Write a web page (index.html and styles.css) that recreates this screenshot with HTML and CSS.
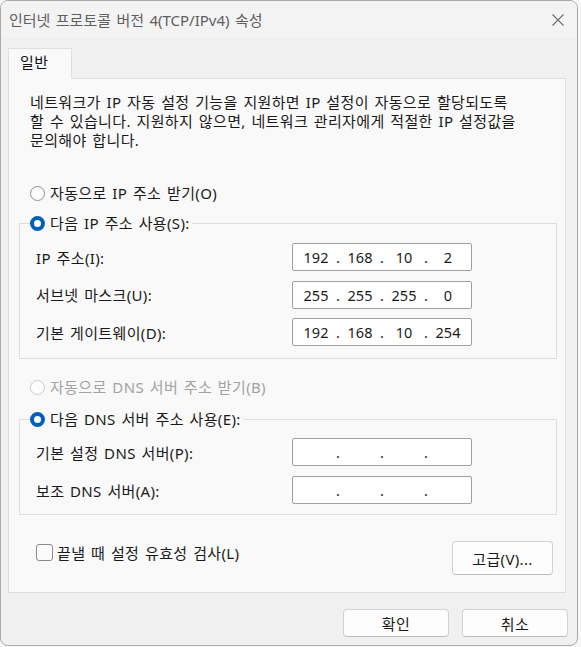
FILE: index.html
```html
<!DOCTYPE html>
<html lang="ko">
<head>
<meta charset="utf-8">
<title>인터넷 프로토콜 버전 4(TCP/IPv4) 속성</title>
<link rel="stylesheet" href="styles.css">
</head>
<body>
<div class="window">
  <div class="titlebar">
    <span class="title">인터넷 프로토콜 버전 4(TCP/IPv4) 속성</span>
    <svg class="close" width="12" height="12" viewBox="0 0 12 12"><path d="M0.5 0.5L11.5 11.5M11.5 0.5L0.5 11.5" stroke="#6e6e6e" stroke-width="1.1" fill="none"/></svg>
  </div>
  <div class="content">
    <div class="tabs"><div class="tab">일반</div></div>
    <div class="panel">
      <p class="desc">네트워크가 IP 자동 설정 기능을 지원하면 IP 설정이 자동으로 할당되도록<br>할 수 있습니다. 지원하지 않으면, 네트워크 관리자에게 적절한 IP 설정값을<br>문의해야 합니다.</p>

      <div class="radio-row first"><span class="radio"></span><span>자동으로 IP 주소 받기(O)</span></div>
      <fieldset class="group group-ip">
        <legend><span class="radio checked"></span><span>다음 IP 주소 사용(S):</span></legend>
        <div class="field-row"><span class="label">IP 주소(I):</span>
          <div class="ipbox"><span class="seg">192</span><span class="dot">.</span><span class="seg">168</span><span class="dot">.</span><span class="seg">10</span><span class="dot">.</span><span class="seg">2</span></div></div>
        <div class="field-row"><span class="label">서브넷 마스크(U):</span>
          <div class="ipbox"><span class="seg">255</span><span class="dot">.</span><span class="seg">255</span><span class="dot">.</span><span class="seg">255</span><span class="dot">.</span><span class="seg">0</span></div></div>
        <div class="field-row"><span class="label">기본 게이트웨이(D):</span>
          <div class="ipbox"><span class="seg">192</span><span class="dot">.</span><span class="seg">168</span><span class="dot">.</span><span class="seg">10</span><span class="dot">.</span><span class="seg">254</span></div></div>
      </fieldset>

      <div class="radio-row disabled second"><span class="radio"></span><span>자동으로 DNS 서버 주소 받기(B)</span></div>
      <fieldset class="group group-dns">
        <legend><span class="radio checked"></span><span>다음 DNS 서버 주소 사용(E):</span></legend>
        <div class="field-row"><span class="label">기본 설정 DNS 서버(P):</span>
          <div class="ipbox empty"><span class="seg"></span><span class="dot">.</span><span class="seg"></span><span class="dot">.</span><span class="seg"></span><span class="dot">.</span><span class="seg"></span></div></div>
        <div class="field-row"><span class="label">보조 DNS 서버(A):</span>
          <div class="ipbox empty"><span class="seg"></span><span class="dot">.</span><span class="seg"></span><span class="dot">.</span><span class="seg"></span><span class="dot">.</span><span class="seg"></span></div></div>
      </fieldset>

      <div class="bottom-row">
        <label class="check-row"><span class="checkbox"></span><span>끝낼 때 설정 유효성 검사(L)</span></label>
        <button class="btn adv">고급(V)...</button>
      </div>
    </div>
    <div class="footer">
      <button class="btn dlg">확인</button>
      <button class="btn dlg">취소</button>
    </div>
  </div>
</div>
</body>
</html>
```

FILE: styles.css
```css
html, body {
  margin: 0;
  padding: 0;
}
body {
  background: #f7f7f7;
  font-family: "Noto Sans", "Noto Sans CJK KR", sans-serif;
  font-size: 15px;
  letter-spacing: 0.35px;
  word-spacing: 1.5px;
  color: #1a1a1a;
  width: 581px;
  height: 647px;
  overflow: hidden;
}
.window {
  box-sizing: border-box;
  width: 578px;
  height: 646px;
  border: 1px solid #a9a9a9;
  border-radius: 8px;
  background: #f0f0f0;
  overflow: hidden;
  display: flex;
  flex-direction: column;
}
.titlebar {
  height: 37px;
  background: #f3f3f3;
  display: flex;
  align-items: center;
  justify-content: space-between;
  padding: 0 13px 0 8px;
  flex: none;
}
.title {
  color: #5f5f5f;
  letter-spacing: 0;
}
.close { display: block; }
.content {
  flex: 1;
  display: flex;
  flex-direction: column;
  padding: 10px 8px 0 7px;
}
.tabs {
  display: flex;
  height: 30px;
}
.tab {
  box-sizing: border-box;
  width: 64px;
  height: 31px;
  border: 1px solid #dfdfdf;
  border-bottom: none;
  background: #f9f9f9;
  padding-left: 11px;
  line-height: 27px;
  color: #111;
  position: relative;
  z-index: 1;
}
.panel {
  box-sizing: border-box;
  width: 558px;
  height: 515px;
  border: 1px solid #dfdfdf;
  background: #f9f9f9;
  padding: 14px 0 0 21px;
}
.desc {
  margin: 0;
  width: 520px;
  line-height: 19px;
  white-space: nowrap;
}
.radio-row, legend {
  display: flex;
  align-items: center;
  gap: 5px;
  height: 20px;
  line-height: 20px;
}
.radio-row.first { margin: 33px 0 0 0; }
.radio-row.second { margin: 18px 0 0 0; }
.radio-row.disabled { color: #a2a2a2; }
.radio {
  box-sizing: border-box;
  width: 15px;
  height: 15px;
  border-radius: 50%;
  border: 1px solid #8b8b8b;
  background: #fdfdfd;
  flex: none;
}
.disabled .radio { border-color: #cbcbcb; }
.radio.checked {
  border: 4px solid #005fb8;
  background: #ffffff;
}
.group {
  box-sizing: border-box;
  width: 538px;
  margin: 0 0 0 -11px;
  border: 1px solid #dedede;
  padding: 0 84px 0 16px;
}
legend {
  padding: 0 2px 0 0;
  margin-left: -6px;
}
.group-ip { height: 146px; margin-top: 10px; padding-top: 10px; }
.group-dns { height: 106px; margin-top: 12px; padding-top: 9px; }
.field-row {
  display: flex;
  justify-content: space-between;
  align-items: center;
  height: 28px;
  margin-bottom: 9.5px;
}
.group-dns .field-row { margin-bottom: 10px; }
.ipbox {
  box-sizing: border-box;
  width: 180px;
  height: 28px;
  border: 1px solid #a0a0a0;
  border-radius: 2px;
  background: #fff;
  display: flex;
  align-items: center;
  padding-left: 3px;
  color: #1a1a1a;
  font-size: 14.5px;
  letter-spacing: 0;
  word-spacing: 0;
}
.seg {
  width: 40px;
  text-align: center;
}
.dot {
  width: 4px;
  text-align: center;
}
.bottom-row {
  display: flex;
  justify-content: space-between;
  align-items: flex-start;
  margin-top: 26px;
  width: 523px;
}
.check-row {
  display: flex;
  align-items: center;
  gap: 4px;
  height: 21px;
  margin: 1px 0 0 6px;
}
.checkbox {
  box-sizing: border-box;
  width: 17px;
  height: 17px;
  border: 1px solid #8a8a8a;
  border-radius: 3px;
  background: #fbfbfb;
}
.btn {
  font-family: inherit;
  font-size: 15px;
  letter-spacing: inherit;
  word-spacing: inherit;
  color: #1a1a1a;
  background: #fdfdfd;
  border: 1px solid #d2d2d2;
  border-bottom-color: #bdbdbd;
  border-radius: 4px;
  padding: 0;
}
.adv { width: 101px; height: 34px; }
.footer {
  display: flex;
  justify-content: flex-end;
  gap: 13px;
  padding: 16px 1px 0 0;
}
.dlg { width: 106px; height: 28px; }
```
